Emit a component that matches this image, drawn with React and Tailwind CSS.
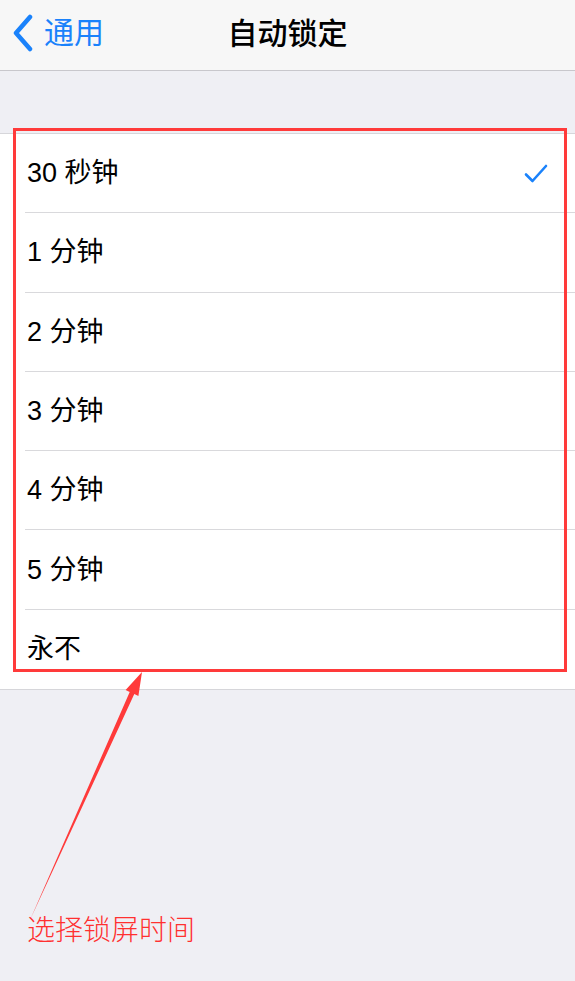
const options = ["30 秒钟", "1 分钟", "2 分钟", "3 分钟", "4 分钟", "5 分钟", "永不"]

function Row({ label, checked, last }) {
  return (
    <div className="h-[79.3px] pl-[25px] flex">
      <div className={`flex-1 flex items-center justify-between pr-[27px] ${last ? "" : "border-b border-[#d9d9dc]"}`}>
        <span className="text-[27px] text-black leading-none pt-[1px] pl-[2px]">{label}</span>
        {checked && (
          <svg width="24" height="19" viewBox="0 0 24 19" fill="none">
            <path d="M2 10.5 L8.5 17 L22 2" stroke="#1a82fb" strokeWidth="2.6" strokeLinecap="round" strokeLinejoin="round" />
          </svg>
        )}
      </div>
    </div>
  )
}

export default function App() {
  return (
    <div
      className="relative w-[575px] h-[981px] bg-[#efeff4] overflow-hidden"
      style={{ fontFamily: '"Liberation Sans", "Noto Sans CJK SC", sans-serif' }}
    >
      <div className="h-[71px] bg-[#f7f7f7] border-b border-[#c8c7cc] flex items-center relative">
        <div className="flex items-center pl-[12px] gap-[10px] text-[#1a82fb] -mt-[4px]">
          <svg width="22" height="38" viewBox="0 0 22 38" fill="none">
            <path d="M18 3 L4 19 L18 35" stroke="#1a82fb" strokeWidth="4.5" strokeLinecap="round" strokeLinejoin="round" />
          </svg>
          <span className="text-[30px] leading-none">通用</span>
        </div>
        <div className="absolute left-0 right-0 text-center text-[30px] font-medium text-black leading-none pointer-events-none -mt-[3px]">
          自动锁定
        </div>
      </div>

      <div className="mt-[62px] bg-white border-t border-b border-[#d6d6da]">
        {options.map((o, i) => (
          <Row key={o} label={o} checked={i === 0} last={i === options.length - 1} />
        ))}
      </div>

      {/* annotation overlay */}
      <div className="absolute left-[13px] top-[128px] w-[554px] h-[544px] border-[3px] border-[#ff3a3a]" />
      <svg className="absolute left-0 top-0" width="575" height="981" viewBox="0 0 575 981">
        <polygon
          points="30,920 129.7,692 125.6,690 142,672 138.4,696 134.3,694"
          fill="#ff3a3a"
        />
      </svg>
      <div
        className="absolute left-[27px] top-[914px] text-[28px] leading-none text-[#ff3030]"
        style={{ fontFamily: '"Noto Sans CJK SC", sans-serif', fontWeight: 300 }}
      >
        选择锁屏时间
      </div>
    </div>
  )
}
